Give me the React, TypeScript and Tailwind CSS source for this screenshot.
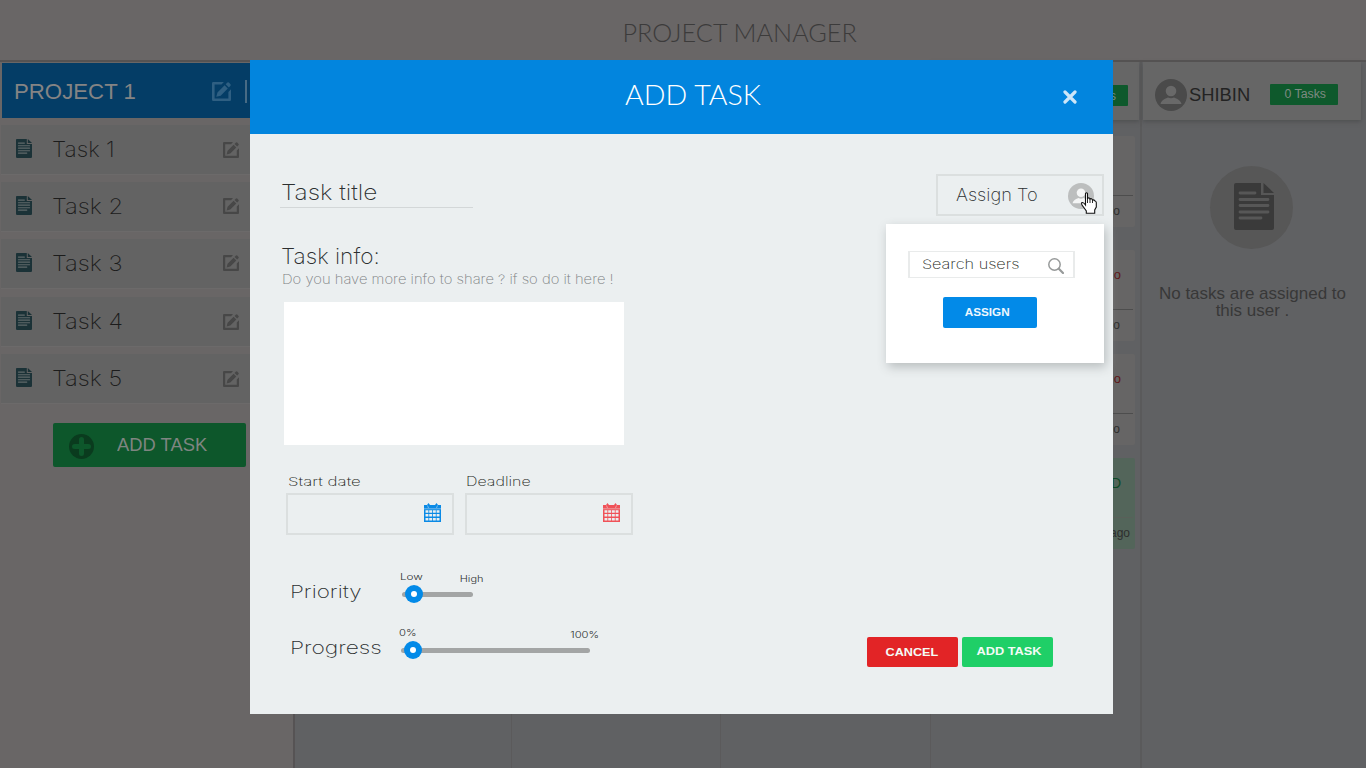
import React from "react";

const sans = "font-['Liberation_Sans',sans-serif]";

function EditIcon({ className }: { className: string }) {
  return (
    <svg viewBox="0 0 16 16" className={className} fill="currentColor">
      <path d="M1 0H10L8 2.2H2.2V13.8H13.8V8.5L16 6.2V15a1 1 0 0 1-1 1H1a1 1 0 0 1-1-1V1a1 1 0 0 1 1-1Z" />
      <path d="M3.6 12.4 4.6 8.8 10.6 2.8 13.3 5.5 7.3 11.5Z M11.5 1.9 13 .4Q13.6 0 14.2.5L15.6 1.9Q16 2.5 15.6 3.1L14.2 4.6Z" />
    </svg>
  );
}

function DocIcon({ className, line }: { className: string; line: string }) {
  return (
    <svg viewBox="0 0 40 47" className={className}>
      <path d="M2 0H27V12H40V45a2 2 0 0 1-2 2H2a2 2 0 0 1-2-2V2A2 2 0 0 1 2 0Z M29.5 0 40 10H29.5Z" fill="currentColor" />
      <path d="M6 10H21M6 16.5H34M6 22.5H34M6 29H34M6 35H27" stroke={line} strokeWidth="2.8" strokeLinecap="round" />
    </svg>
  );
}

function Avatar({ className, person }: { className: string; person: string }) {
  return (
    <svg viewBox="0 0 32 32" className={className}>
      <circle cx="16" cy="16" r="16" fill="currentColor" />
      <circle cx="16" cy="12" r="5.3" fill={person} />
      <path d="M5.5 25C6.500 21 10 19.500 13 18.500Q16 20 19 18.500C22 19.500 25.500 21 26.500 25Z" fill={person} />
    </svg>
  );
}

function Calendar({ className }: { className: string }) {
  return (
    <svg viewBox="0 0 17 19" className={className}>
      <path d="M0 2H3L4.500 0 6 2H11L12.500 0 14 2H17V19H0Z" fill="currentColor" />
      <path d="M1.500 8.500H15.500M1.500 12.300H15.500M1.500 16.200H15.500" stroke="#ebeff0" strokeWidth="2.500" strokeDasharray="2.900 .8" />
      <path d="M3.500 2.500 4.500 5M13.500 2.500 12.500 5M0 5.800H17" stroke="#ebeff0" strokeWidth=".7" opacity=".7" />
    </svg>
  );
}

function Knob({ className }: { className: string }) {
  return (
    <span className={`absolute flex size-[18px] items-center justify-center rounded-full bg-[#028ae8] ${className}`}>
      <span className="size-[6px] rounded-full bg-white" />
    </span>
  );
}

function TaskRow({ n }: { n: number }) {
  return (
    <li className={`flex h-[49px] items-start bg-[#636363] shadow-[0_1px_1px_#6c6a6a] ${n === 4 ? "mt-px" : ""}`}>
      <DocIcon className="mt-[14px] ml-[15px] h-[19px] w-[16px] text-[#1b3237]" line="#60696b" />
      <span className="mt-[14px] ml-[20px] w-[171px] text-[21px] leading-[21px] font-extralight text-[#1c1c1c]">
        <span className={`inline-block origin-left ${n === 1 ? "scale-x-[1.08]" : "scale-x-[1.13]"}`}>Task {n}</span>
      </span>
      <EditIcon className={`size-[16px] text-[#474747] ${n === 2 || n === 3 ? "mt-[16px]" : "mt-[17px]"}`} />
    </li>
  );
}

function MiniCard({ top, bottom, tone, done }: { top: string; bottom: string; tone: string; done?: boolean }) {
  return (
    <div className={`flex h-[91px] flex-col items-end rounded-[2px] pr-[2px] text-[13px] leading-none ${done ? "bg-[#53655a]" : "bg-[#666565]"} ${sans}`}>
      <span className={`mt-[18px] h-[41px] ${done ? "pr-[12px] text-[14px]" : "pr-[12px]"} ${tone}`}>{top}</span>
      <span className={`h-px w-full ${done ? "bg-[#596059]" : "bg-[#4d4d4d]"}`} />
      <span className={`mt-[9px] text-[12px] text-[#2e2e2e] ${done ? "pr-[3px]" : "pr-[13px]"}`}>{bottom}</span>
    </div>
  );
}

export default function App() {
  return (
    <div className="relative flex h-[768px] w-[1366px] flex-col overflow-hidden bg-[#606163] font-[Inter,sans-serif]">
      <header className="flex h-[62px] shrink-0 justify-center border-b-2 border-[#555353] bg-[#696666] pt-[20px]">
        <h1 className="origin-center scale-x-[1.01] pl-[112px] text-[25px] leading-[25px] font-light text-[#3c3b3b] font-[Lato,sans-serif]">PROJECT MANAGER</h1>
      </header>

      <div className="flex min-h-0 flex-1">
        <aside className="w-[295px] shrink-0 border-r-2 border-[#565354] bg-[#696666] pt-px">
          <div className={`ml-[2px] flex h-[55px] items-start bg-[#043d66] ${sans}`}>
            <span className="mt-[18px] ml-[12px] w-[198px] text-[22px] leading-[22px] text-[#848484]">
              <span className="inline-block origin-left scale-x-[1.01]">PROJECT 1</span>
            </span>
            <EditIcon className="mt-[19px] size-[19px] text-[#2f5f82]" />
            <span className="mt-[17px] ml-[14px] h-[23px] w-[2px] bg-[#486b84]" />
          </div>
          <ul className="mt-[7px] ml-px flex flex-col gap-[8px]">
            {[1, 2, 3, 4, 5].map((n) => <TaskRow key={n} n={n} />)}
          </ul>
          <button className={`mt-[20px] ml-[53px] flex h-[44px] w-[193px] items-center rounded-[2px] bg-[#0d572b] pl-[16px] text-[18px] text-[#7f8581] ${sans}`}>
            <svg viewBox="0 0 25 25" className="mt-[2px] mr-[23px] size-[25px]">
              <circle cx="12.500" cy="12.500" r="12.500" fill="#0a3b1e" />
              <path d="M12.500 5.500V19.500M5.500 12.500H19.500" stroke="#0d572b" strokeWidth="5" strokeLinecap="round" />
            </svg>
            <span className="origin-left scale-x-[1.02] pt-px">ADD TASK</span>
          </button>
        </aside>

        <main className="flex flex-1">
          <section className="w-[217px] border-r border-[#5b5a5b]" />
          <section className="w-[209px] border-r border-[#5b5a5b]" />
          <section className="w-[210px] border-r border-[#5b5a5b]" />
          <section className="flex w-[211px] flex-col border-r-2 border-[#5a5a5b] pr-px">
            <div className="flex h-[58px] items-start justify-end bg-[#666] pt-[23px] pr-[11px] shadow-[0_2px_4px_#505152]">
              <span className={`flex h-[21px] w-[68px] items-center justify-end rounded-[1px] bg-[#0e592c] pr-[12px] text-[12px] text-[#7d8a82] ${sans}`}>2 Tasks</span>
            </div>
            <div className="mt-[16px] mr-[4px] ml-[4px] flex flex-col gap-[13px]">
              <MiniCard top="1 day ago" bottom="2 days ago" tone="text-[#666565]" />
              <div className="h-[10px] -mb-[13px]" />
              <MiniCard top="1 day ago" bottom="2 days ago" tone="text-[#5e1517]" />
              <MiniCard top="1 day ago" bottom="2 days ago" tone="text-[#5e1517]" />
              <MiniCard top="COMPLETED" bottom="2 days ago" tone="text-[#0d4a27]" done />
            </div>
          </section>
          <section className={`flex w-[224px] flex-col items-start ${sans}`}>
            <div className="ml-px flex h-[58px] w-[218px] items-start bg-[#666] shadow-[0_2px_4px_#505152]">
              <Avatar className="mt-[17px] ml-[12px] size-[32px] text-[#4a4a4a]" person="#696969" />
              <span className="mt-[24px] ml-[2px] w-[81px] text-[18px] leading-[18px] text-[#232323]">
                <span className="inline-block origin-left scale-x-[1.02]">SHIBIN</span>
              </span>
              <span className="mt-[22px] flex h-[21px] w-[68px] items-center rounded-[1px] bg-[#0e592c] pl-[14.5px] text-[12.3px] text-[#7d8a82]">0 Tasks</span>
            </div>
            <div className="mt-[46px] ml-[68px] flex size-[83px] items-center justify-center rounded-full bg-[#575757]">
              <DocIcon className="mb-[2px] ml-[5px] h-[47px] w-[40px] text-[#3a3a3a]" line="#575757" />
            </div>
            <p className="mt-[36px] ml-[10.5px] w-[200px] text-center text-[17px] leading-[17px] text-[#383838]">No tasks are assigned to this user .</p>
          </section>
        </main>
      </div>

      <div role="dialog" className="absolute top-[60px] left-[250px] flex h-[654px] w-[863px] flex-col bg-[#ebeff0] text-[#2c2f30]">
        <div className="flex h-[74px] shrink-0 bg-[#0285de]">
          <h2 className="mt-[21px] ml-[375px] w-[438px] text-[27.5px] leading-[27px] font-light text-white font-[Lato,sans-serif]">
            <span className="inline-block origin-left scale-x-[1.04]">ADD TASK</span>
          </h2>
          <svg viewBox="0 0 14 14" className="mt-[30px] size-[14px]">
            <path d="M2 2 12 12M12 2 2 12" stroke="#cde6f8" strokeWidth="3.200" strokeLinecap="round" />
          </svg>
        </div>

        <div className="flex flex-1 justify-between">
          <form className="flex w-[400px] flex-col items-start pt-[47px]">
            <div className="ml-[30px] h-[27px] w-[193px] border-b border-[#d3d7d8] pl-px text-[22px] leading-[22px] font-extralight">
              <span className="inline-block origin-left scale-x-[1.11]">Task title</span>
            </div>
            <label className="mt-[37px] ml-[31px] origin-left scale-x-[1.03] text-[22px] leading-[22px] font-extralight">Task info:</label>
            <p className="mt-[6px] ml-[31.5px] origin-left scale-x-[1.137] text-[13px] leading-[13px] font-extralight whitespace-nowrap text-[#7c8082]">Do you have more info to share ? if so do it here !</p>
            <div className="mt-[16px] ml-[34px] h-[143px] w-[340px] bg-white" />

            <div className="mt-[29px] ml-[36px] flex gap-[11px] text-[12.5px] leading-[13px] font-extralight text-[#1c1f20]">
              <div className="w-[168px]">
                <span className="ml-[2px] inline-block h-[13px] origin-left translate-y-px scale-x-[1.35] align-top">Start date</span>
                <div className="mt-[6px] flex h-[42px] justify-end border-2 border-[#dbdfdf] pt-[8px] pr-[11px]">
                  <Calendar className="h-[19px] w-[17px] text-[#0a8ae6]" />
                </div>
              </div>
              <div className="w-[168px]">
                <span className="ml-px inline-block h-[13px] origin-left translate-y-px scale-x-[1.28] align-top">Deadline</span>
                <div className="mt-[6px] flex h-[42px] justify-end border-2 border-[#dbdfdf] pt-[8px] pr-[11px]">
                  <Calendar className="h-[19px] w-[17px] text-[#f05258]" />
                </div>
              </div>
            </div>

            <div className="mt-[37px] ml-[40px] flex h-[56px] font-extralight">
              <span className="mt-[12px] w-[110px] text-[17px] leading-[17px]"><span className="inline-block origin-left scale-x-[1.32]">Priority</span></span>
              <div className="w-[83px] text-[9px] leading-[9px] font-light">
                <div className="flex h-[20px] justify-between">
                  <span className="origin-left scale-x-[1.3]">Low</span>
                  <span className="mt-[2px] origin-right scale-x-[1.22]">High</span>
                </div>
                <div className="relative ml-[2px] h-[5px] w-[71px] rounded-full bg-[#a3a5a5]"><Knob className="top-[-7px] left-[3px]" /></div>
              </div>
            </div>
            <div className="ml-[40px] flex h-[40px] font-extralight">
              <span className="mt-[12px] w-[109px] text-[17px] leading-[17px]"><span className="inline-block origin-left scale-x-[1.34]">Progress</span></span>
              <div className="w-[200px] text-[9px] leading-[9px] font-light">
                <div className="flex h-[20px] justify-between">
                  <span className="origin-left scale-x-[1.25]">0%</span>
                  <span className="mt-[2px] origin-right scale-x-[1.25]">100%</span>
                </div>
                <div className="relative ml-[2px] h-[5px] w-[189px] rounded-full bg-[#a3a5a5]"><Knob className="top-[-7px] left-[3px]" /></div>
              </div>
            </div>
          </form>

          <div className="flex w-[246px] flex-col items-end pt-[40px]">
            <div className="mr-[9px] flex h-[42px] w-[168px] border-2 border-[#dbdfdf]">
              <span className="mt-[11px] ml-[18px] w-[112px] text-[17px] leading-[17px] font-extralight"><span className="inline-block origin-left scale-x-[1.07]">Assign To</span></span>
              <div className="relative mt-[7px] size-[26px] shrink-0">
                <Avatar className="size-[26px] text-[#bcbebe]" person="#f4f5f5" />
                <svg viewBox="0 0 16 22" className="absolute top-[9px] left-[13px] h-[22px] w-[16px]">
                  <path d="M4.500 1.500Q5.500 0 6.500 1.500V7L7 6Q8.500 5.500 9 7 10.500 6 11.500 8 13 7.500 14 9 15 9 15.300 10.500V15L13.700 18V21.300H5.300V19L1 13Q.2 11 1 10.500 2.500 10 4.500 13Z" fill="#fff" stroke="#111" strokeWidth="1.100" />
                  <path d="M6.500 6V11M9 7V11M11.500 8V11" stroke="#111" strokeWidth=".9" />
                </svg>
              </div>
            </div>
            <div className="mt-[8px] mr-[9px] flex h-[139px] w-[218px] flex-col items-start bg-white pt-[27px] shadow-[2px_4px_10px_#b8bdbe]">
              <div className="ml-[22px] flex h-[27px] w-[167px] border-x-2 border-y border-x-[#e9ebeb] border-y-[#e9ebeb]">
                <span className="mt-[6px] ml-[12px] w-[126px] text-[13px] leading-[13px] font-extralight text-[#1c1f20]"><span className="inline-block origin-left scale-x-[1.25]">Search users</span></span>
                <svg viewBox="0 0 16 16" className="mt-[6px] size-[16px] shrink-0" fill="none" stroke="#979a9a">
                  <circle cx="6.500" cy="6.500" r="5.700" strokeWidth="1.500" />
                  <path d="M10.800 10.800 15 15" strokeWidth="2.200" strokeLinecap="round" />
                </svg>
              </div>
              <button className={`mt-[19px] ml-[57px] h-[31px] w-[94px] rounded-[2px] bg-[#028ae8] pr-[5px] text-[10px] font-bold text-[#eef7fe] ${sans}`}>
                <span className="inline-block scale-x-[1.17]">ASSIGN</span>
              </button>
            </div>
            <div className={`mt-[274px] mr-[60px] flex gap-[4px] text-[11px] font-bold text-[#f4fbf6] ${sans}`}>
              <button className="h-[30px] w-[91px] rounded-[2px] bg-[#e22426] pr-[2px]"><span className="inline-block scale-x-[1.15]">CANCEL</span></button>
              <button className="h-[30px] w-[91px] rounded-[2px] bg-[#1fcf67] pb-[2px] pl-[3px]"><span className="inline-block scale-x-[1.16]">ADD TASK</span></button>
            </div>
          </div>
        </div>
      </div>
    </div>
  );
}
